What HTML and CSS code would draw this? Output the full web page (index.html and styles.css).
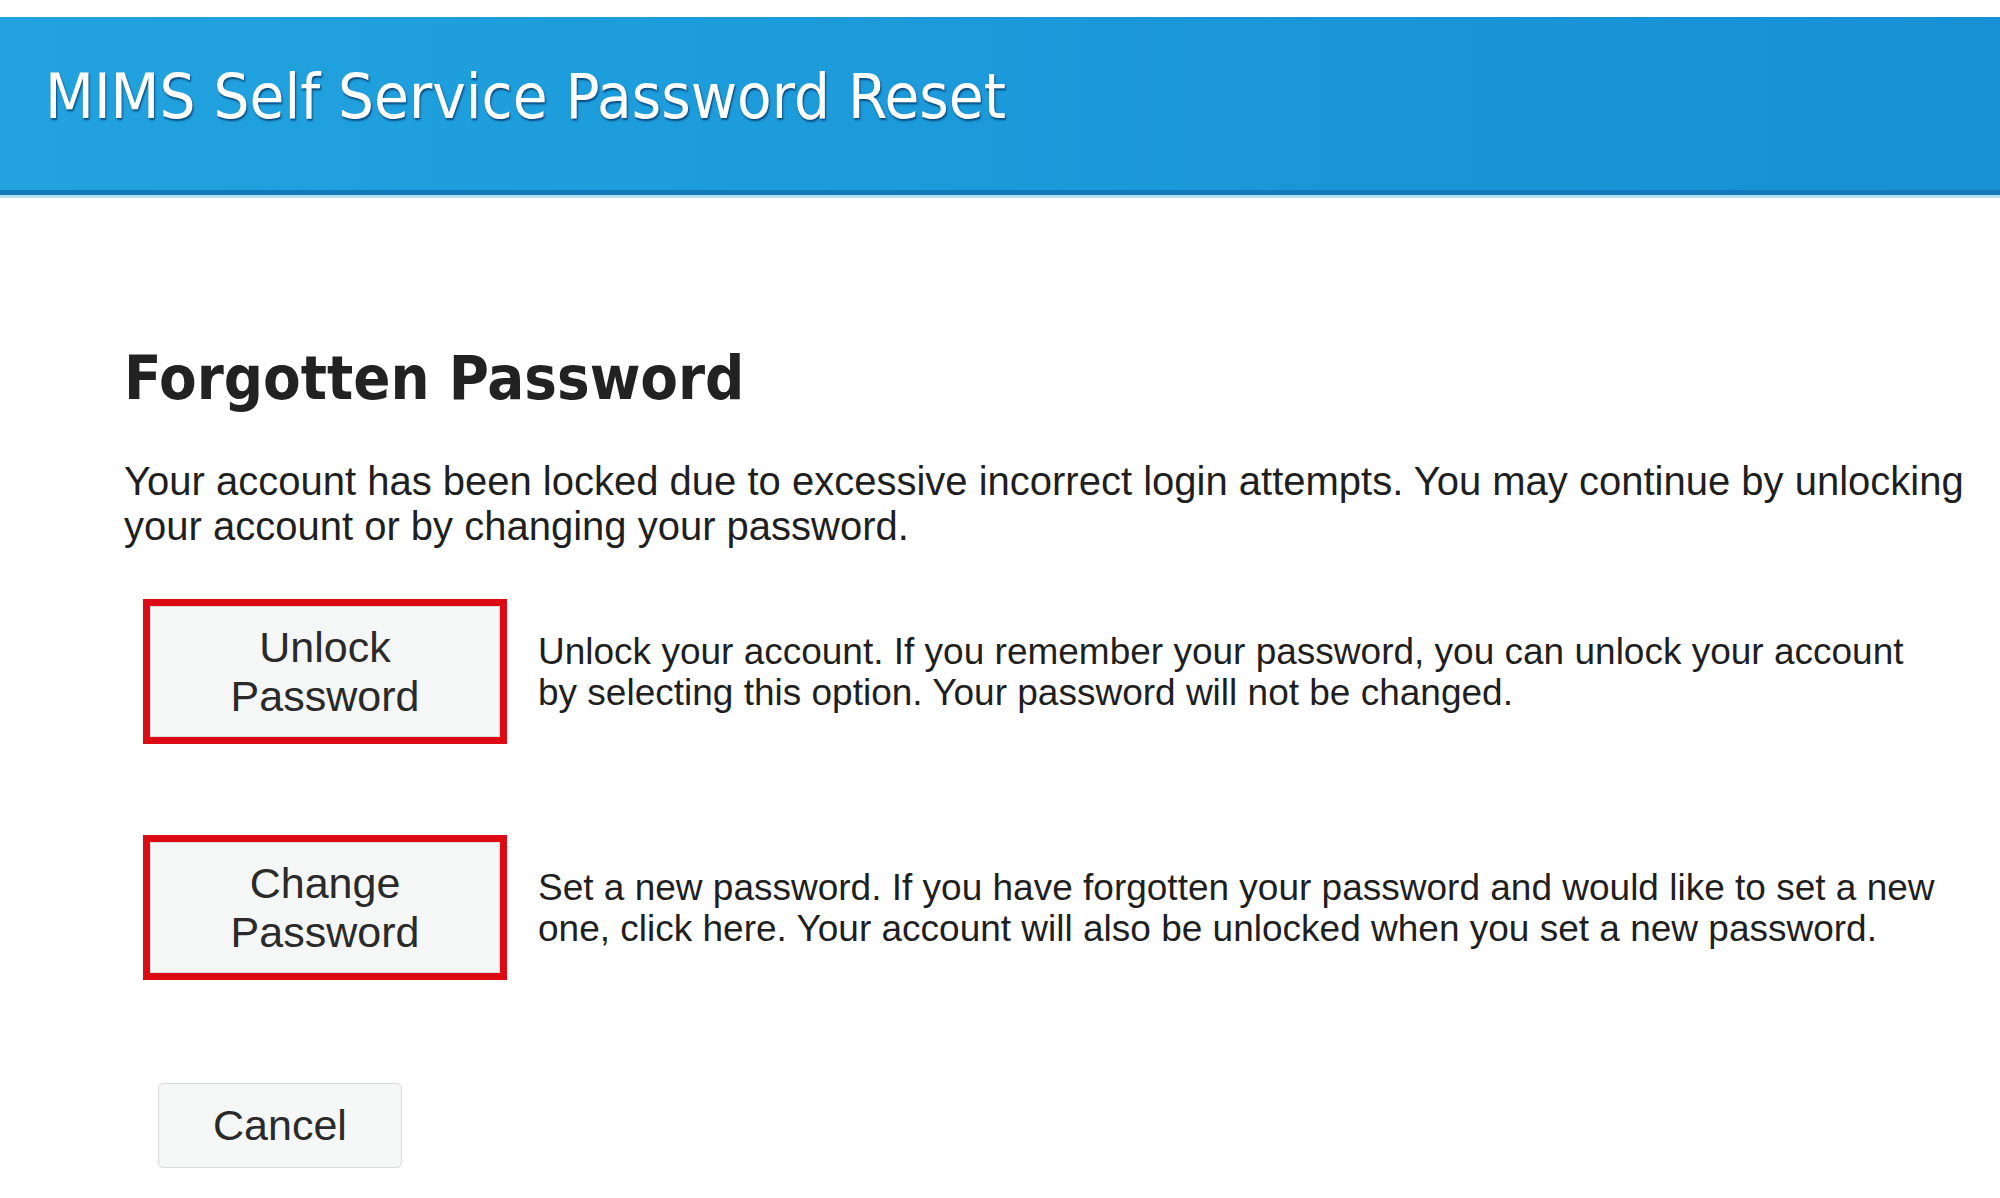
FILE: index.html
```html
<!DOCTYPE html>
<html lang="en">
<head>
<meta charset="utf-8">
<title>MIMS Self Service Password Reset</title>
<link rel="stylesheet" href="styles.css">
</head>
<body>
<div class="page">
  <header class="topbar">
    <h1 class="app-title">MIMS Self Service Password Reset</h1>
  </header>
  <main class="content">
    <h2 class="page-title">Forgotten Password</h2>
    <p class="intro">Your account has been locked due to excessive incorrect login attempts. You may continue by unlocking<br>your account or by changing your password.</p>

    <div class="option">
      <div class="highlight">
        <button class="btn btn-option" type="button">Unlock<br>Password</button>
      </div>
      <p class="option-desc">Unlock your account. If you remember your password, you can unlock your account<br>by selecting this option. Your password will not be changed.</p>
    </div>

    <div class="option option-second">
      <div class="highlight">
        <button class="btn btn-option" type="button">Change<br>Password</button>
      </div>
      <p class="option-desc">Set a new password. If you have forgotten your password and would like to set a new<br>one, click here. Your account will also be unlocked when you set a new password.</p>
    </div>

    <button class="btn btn-cancel" type="button">Cancel</button>
  </main>
</div>
</body>
</html>
```

FILE: styles.css
```css
html, body {
  margin: 0;
  padding: 0;
  background: #ffffff;
}

.page {
  padding-top: 17px;
  font-family: "Liberation Sans", Arial, sans-serif;
  color: #1f1f1f;
}

.topbar {
  box-sizing: border-box;
  height: 178px;
  background: linear-gradient(to right, #22a3df 0%, #1c9ada 45%, #1790d5 100%);
  border-bottom: 5px solid #1479b9;
  box-shadow: 0 3px 0 #b9def2;
  display: flex;
  align-items: center;
  padding: 0 0 14px 45px;
}

.app-title {
  margin: 0;
  font-family: "DejaVu Sans Condensed", "DejaVu Sans", sans-serif;
  font-weight: normal;
  font-size: 63px;
  line-height: 70px;
  color: #ffffff;
  text-shadow: 1px 2px 2px rgba(0, 45, 95, 0.75);
}

.content {
  padding-left: 124px;
  padding-top: 148px;
}

.page-title {
  margin: 0;
  font-family: "DejaVu Sans Condensed", "DejaVu Sans", sans-serif;
  font-weight: bold;
  font-size: 61px;
  line-height: 70px;
  color: #222222;
}

.intro {
  margin: 46px 0 0 0;
  font-size: 40px;
  line-height: 45px;
  white-space: nowrap;
}

.option {
  display: flex;
  align-items: center;
  margin: 50px 0 0 19px;
  gap: 31px;
}

.option-second {
  margin-top: 91px;
}

.highlight {
  flex-shrink: 0;
  border: 7px solid #dc0a12;
  width: 350px;
  height: 131px;
  display: flex;
}

.btn {
  font-family: "Liberation Sans", Arial, sans-serif;
  color: #2a2a2a;
  background: #f5f6f6;
  border: 1px solid #d8dadb;
  cursor: pointer;
}

.btn-option {
  flex: 1;
  font-size: 43px;
  line-height: 49px;
  padding: 0;
}

.option-desc {
  margin: 0;
  font-size: 37px;
  line-height: 41px;
  white-space: nowrap;
}

.btn-cancel {
  display: block;
  margin: 103px 0 0 34px;
  width: 244px;
  height: 85px;
  border-radius: 5px;
  font-size: 43px;
  padding: 0;
}
```
